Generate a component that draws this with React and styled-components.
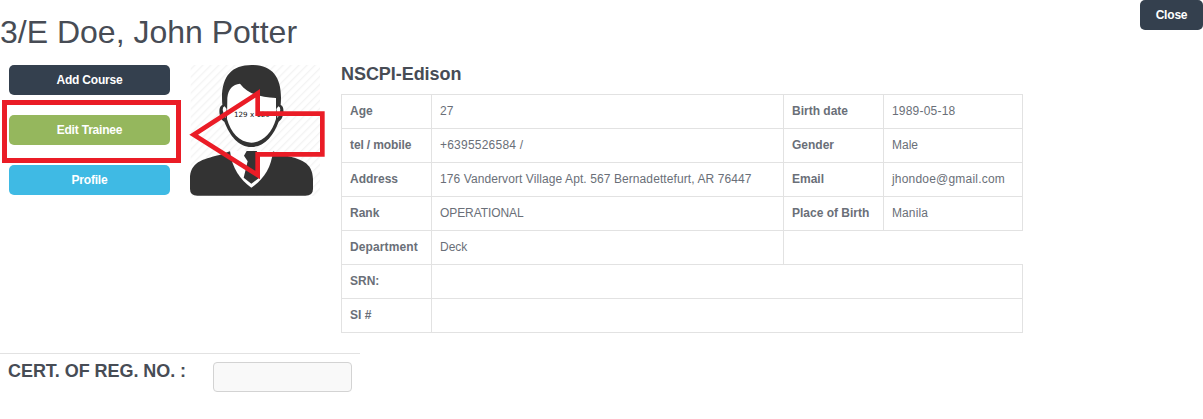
import React from "react";
import styled, { createGlobalStyle } from "styled-components";

const GlobalStyle = createGlobalStyle`
  * { box-sizing: border-box; }
  body {
    margin: 0;
    background: #fff;
    color: #6a6f78;
    font: 12px/17px "Liberation Sans", Arial, sans-serif;
    overflow: hidden;
  }
`;

const Page = styled.main`
  position: relative;
  width: 1203px;
  height: 419px;
`;

const Header = styled.header`
  display: flex;
  justify-content: space-between;
  align-items: flex-start;
  height: 65px;
`;

const Title = styled.h1`
  margin: 12px 0 0;
  color: #474c55;
  font-size: 32px;
  line-height: 40px;
  font-weight: 400;
`;

const tones = { dark: "#34404e", green: "#95b75d", blue: "#3fbae4" };

const Button = styled.button`
  height: 30px;
  width: ${(p) => (p.$wide ? "161px" : "63px")};
  padding: 0;
  border: 0;
  border-radius: 5px;
  background: ${(p) => tones[p.$tone]};
  color: #fff;
  font: bold 12px/30px "Liberation Sans", Arial, sans-serif;
  letter-spacing: -0.2px;
  text-align: center;
`;

const Body = styled.section`
  display: flex;
  align-items: flex-start;
  height: 288px;
  padding-left: 9px;
`;

const Actions = styled.nav`
  display: flex;
  flex-direction: column;
  gap: 20px;
  width: 161px;
`;

const Photo = styled.svg`
  display: block;
  width: 130px;
  height: 131px;
  margin-left: 20px;
`;

const Details = styled.div`
  margin-left: 21px;
`;

const Subtitle = styled.h2`
  margin: ${(p) => p.$margin || 0};
  color: #474c55;
  font-size: 18px;
  line-height: 20px;
  font-weight: bold;
  letter-spacing: -0.05px;
`;

const Table = styled.table`
  width: 682px;
  table-layout: fixed;
  border-collapse: collapse;
`;

const Col = styled.col`
  width: ${(p) => p.$w}px;
`;

const Cell = styled.td`
  height: 34px;
  padding: 0 8px;
  border: 1px solid #e2e2e2;
  font-weight: ${(p) => (p.$label ? "bold" : "normal")};
  letter-spacing: ${(p) => p.$tracking || 0}px;
  white-space: nowrap;
  vertical-align: middle;
`;

const Registration = styled.section`
  display: flex;
  align-items: flex-start;
  justify-content: space-between;
  width: 360px;
  height: 60px;
  padding: 8px 8px 0;
  border-top: 1px solid #e2e2e2;
`;

const Input = styled.input`
  width: 139px;
  height: 30px;
  border: 1px solid #d3d3d3;
  border-radius: 4px;
  background: #f9f9f9;
`;

const Highlight = styled.div`
  position: absolute;
  left: 2px;
  top: 100px;
  width: 179px;
  height: 63px;
  border: 5px solid #ea1c26;
`;

const Arrow = styled.svg`
  position: absolute;
  left: 180px;
  top: 85px;
  width: 150px;
  height: 100px;
`;

const rows = [
  [["Age"], ["27"], ["Birth date"], ["1989-05-18", 0.2]],
  [["tel / mobile", -0.12], ["+6395526584 /", 0.22], ["Gender"], ["Male"]],
  [["Address"], ["176 Vandervort Village Apt. 567 Bernadettefurt, AR 76447", 0.09], ["Email"], ["jhondoe@gmail.com", 0.2]],
  [["Rank"], ["OPERATIONAL", -0.08], ["Place of Birth"], ["Manila", 0.1]],
  [["Department", 0.12], ["Deck"]],
];

function Avatar() {
  return (
    <Photo viewBox="30 30 390 393">
      <defs>
        <pattern id="hatch" width="17" height="17" patternUnits="userSpaceOnUse" patternTransform="rotate(45)">
          <rect width="17" height="17" fill="#fff" />
          <rect width="4" height="17" fill="#f4f4f4" />
        </pattern>
      </defs>
      <rect x="32" y="30" width="388" height="393" fill="url(#hatch)" />
      <path
        d="M127 150 C120 70 150 30 215 30 C280 30 309 70 302 150 C315 152 313 192 296 200 C281 242 252 276 214 276 C176 276 149 242 133 200 C116 192 113 154 127 150Z"
        fill="#333"
      />
      <path
        d="M142 128 C145 102 158 88 180 86 C203 116 238 126 288 129 L288 192 C276 232 250 262 214 263 C178 262 152 232 141 192Z"
        fill="#fff"
      />
      <path d="M134 154 Q126 156 129 169 L136 190 L140 162Z M295 154 Q303 156 300 169 L293 190 L289 162Z" fill="#fff" />
      <path
        d="M30 372 C30 322 66 313 118 300 L150 289 H278 L310 300 C362 312 398 322 399 372 V402 Q399 422 376 422 H52 Q30 422 30 402Z"
        fill="#333"
      />
      <path d="M150 288 C156 340 180 374 214 398 C249 374 274 340 279 288Z" fill="#fff" />
      <path
        d="M200 288 H230 L238 303 L228 319 L238 368 L214 386 L191 368 L203 319 L192 302Z"
        fill="#333"
      />
      <text x="162" y="186" fontFamily="DejaVu Sans, sans-serif" fontSize="21.5" fill="#111">
        129 x 129
      </text>
    </Photo>
  );
}

export default function App() {
  return (
    <Page>
      <GlobalStyle />
      <Header>
        <Title>3/E Doe, John Potter</Title>
        <Button $tone="dark">Close</Button>
      </Header>
      <Body>
        <Actions>
          <Button $wide $tone="dark">Add Course</Button>
          <Button $wide $tone="green">Edit Trainee</Button>
          <Button $wide $tone="blue">Profile</Button>
        </Actions>
        <Avatar />
        <Details>
          <Subtitle $margin="-1px 0 10px">NSCPI-Edison</Subtitle>
          <Table>
            <colgroup>
              <Col $w={90} />
              <Col $w={352} />
              <Col $w={100} />
              <Col $w={139} />
            </colgroup>
            <tbody>
              {rows.map((row) => (
                <tr key={row[0][0]}>
                  {row.map(([text, tracking], i) => (
                    <Cell key={text} $label={i % 2 === 0} $tracking={tracking}>{text}</Cell>
                  ))}
                </tr>
              ))}
              {["SRN:", "SI #"].map((label) => (
                <tr key={label}>
                  <Cell $label>{label}</Cell>
                  <Cell colSpan={3} />
                </tr>
              ))}
            </tbody>
          </Table>
        </Details>
      </Body>
      <Registration>
        <Subtitle $margin="-1px 0 0">CERT. OF REG. NO. :</Subtitle>
        <Input />
      </Registration>
      <Highlight />
      <Arrow viewBox="0 90 450 300">
        <path
          d="M41 239 L233 115 V176 H427 V298 H233 V360 Z"
          fill="none"
          stroke="#ea1c26"
          strokeWidth="14"
        />
      </Arrow>
    </Page>
  );
}
